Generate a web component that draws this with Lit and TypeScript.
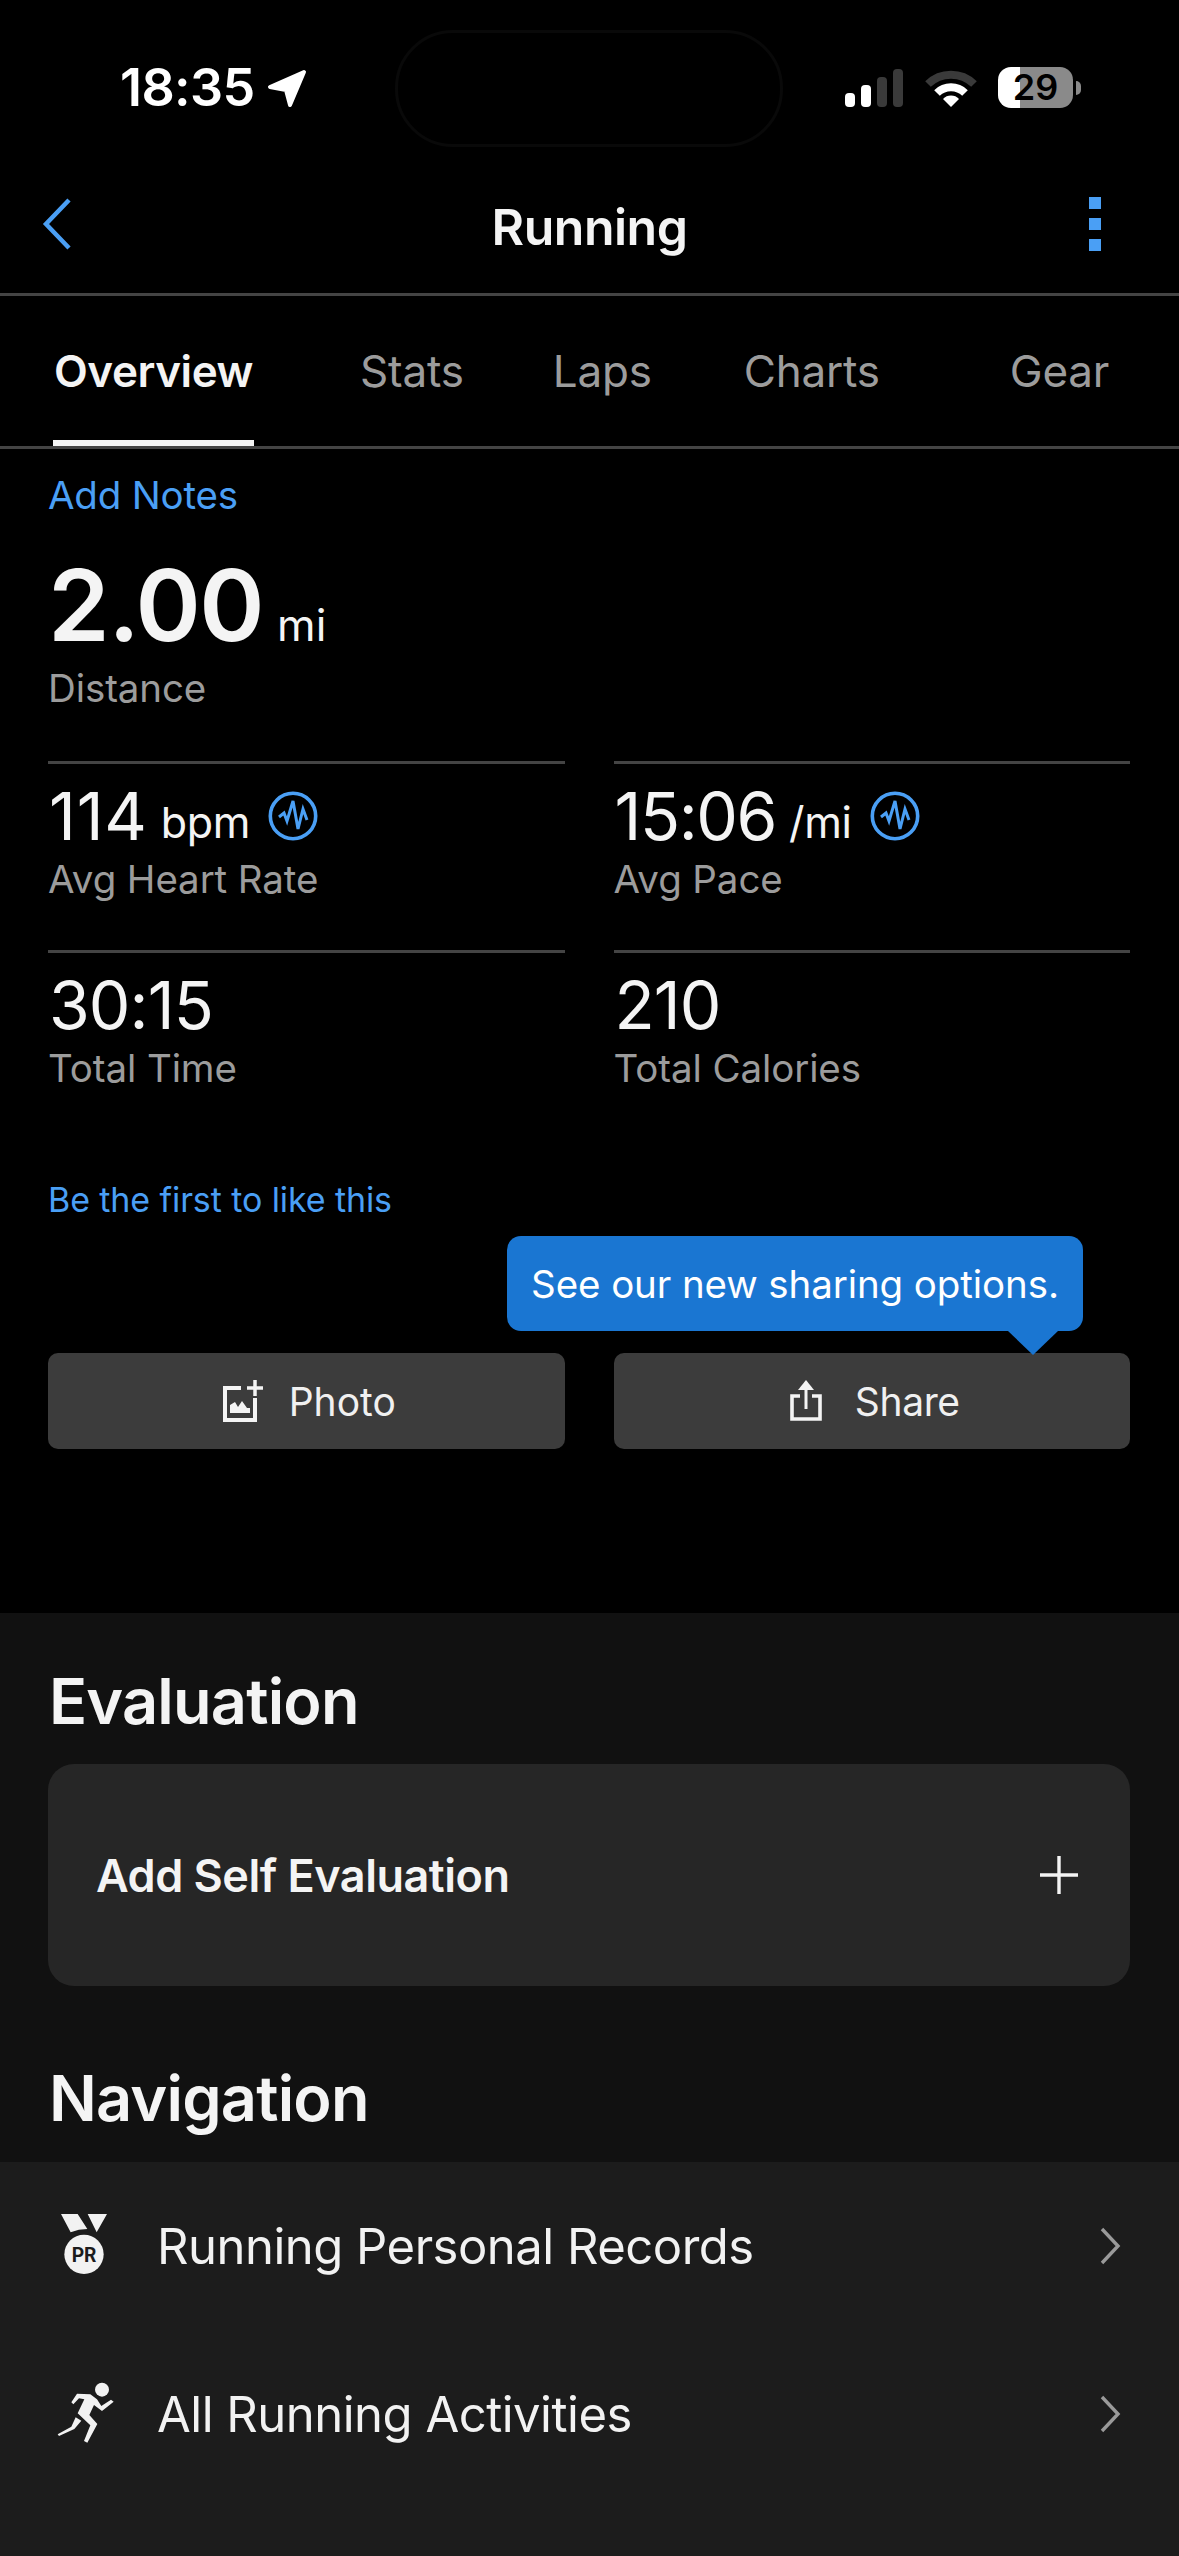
import { LitElement, html, css } from "lit";
import { customElement } from "lit/decorators.js";

const pulse = html`<svg class="pulse" viewBox="0 0 50 50" aria-hidden="true">
  <circle cx="25" cy="25" r="22.7" fill="none" stroke="#4a9ff5" stroke-width="3.6"/>
  <polyline points="11,26 16,22 19,30 25,10 30,38 35,18 39,29" fill="none" stroke="#4a9ff5" stroke-width="3"/>
</svg>`;

const chevron = html`<svg class="chev" viewBox="0 0 22 40" aria-hidden="true"><polyline points="3,3 19,20 3,37" fill="none" stroke="#9a9a9a" stroke-width="3.4"/></svg>`;

@customElement("app-root")
export class AppRoot extends LitElement {
  static styles = css`
    :host { display: block; width: 1179px; min-height: 2556px; background: #1c1c1c; color: #f4f4f4; font-family: Inter, "Liberation Sans", sans-serif; }
    * { box-sizing: border-box; }
    .top { background: #000; height: 1613px; position: relative; }

    .status { height: 150px; display: flex; align-items: flex-start; padding: 67px 0 0 120px; position: relative; }
    .time { font-size: 52px; font-weight: 600; line-height: 42px; width: 147px; letter-spacing: -0.6px; color: #fff; white-space: nowrap; }
    .loc { width: 40px; height: 39px; margin-top: 2px; }
    .island { position: absolute; left: 395px; top: 30px; width: 388px; height: 117px; border: 3px solid #090909; border-radius: 58px; }
    .sys { margin-left: auto; margin-right: 98px; display: flex; align-items: flex-start; padding-top: 2px; }
    .signal { width: 58px; height: 38px; }
    .wifi { width: 52px; height: 38px; margin-left: 22px; }
    .batt { margin-left: 21px; width: 75px; height: 41px; margin-top: -2px; border-radius: 13px; position: relative; background: linear-gradient(90deg, #fff 0 22px, #8a8a8a 22px); color: #000; font-size: 36px; font-weight: 600; line-height: 41px; text-align: center; }
    .nub { margin-left: 3px; width: 5px; height: 14px; margin-top: 12px; background: #8a8a8a; border-radius: 0 7px 7px 0; }

    .nav { height: 146px; border-bottom: 3px solid #444; display: flex; align-items: center; justify-content: space-between; padding: 5px 78px 0 42px; position: relative; }
    .back { width: 30px; height: 52px; }
    .title { position: absolute; left: 0; right: 0; top: 47px; text-align: center; font-size: 50px; line-height: 60px; font-weight: 600; letter-spacing: -0.5px; }
    .dots { display: flex; flex-direction: column; gap: 9px; }
    .dots i { display: block; width: 12px; height: 12px; background: #4a9ff5; }

    .tabs { height: 153px; border-bottom: 3px solid #444; display: flex; padding: 47px 0 0 54px; position: relative; font-size: 44px; line-height: 56px; color: #9c9c9c; letter-spacing: -0.2px; }
    .tab { white-space: nowrap; }
    .tab.on { color: #f4f4f4; font-weight: 600; position: relative; letter-spacing: -0.45px; }
    .tab.on::after { content: ""; position: absolute; left: -1px; right: -1px; top: 97px; height: 6px; background: #f4f4f4; }
    .t2 { margin-left: 107px; } .t3 { margin-left: 89px; } .t4 { margin-left: 92px; } .t5 { margin-left: 130px; }

    .body { padding: 0 49px 0 48px; }
    .link { color: #4a9ff5; }
    .notes { font-size: 38.5px; line-height: 46px; padding: 23px 0 0 0; letter-spacing: -0.2px; }
    .dist { display: flex; align-items: baseline; margin-top: 35px; height: 104px; line-height: 104px; }
    .big { font-size: 99px; font-weight: 600; letter-spacing: -1.5px; }
    .mi { font-size: 44px; margin-left: 14px; }
    .lab { font-size: 38.5px; line-height: 46px; color: #9c9c9c; letter-spacing: -0.1px; }
    .dlab { margin-top: 8px; }
    .grid { display: grid; grid-template-columns: 1fr 1fr; column-gap: 49px; margin-top: 50px; }
    .cell { border-top: 3px solid #444; height: 189px; padding-top: 13px; }
    .val { display: flex; align-items: center; height: 78px; line-height: 78px; padding-left: 1px; }
    .num { font-size: 66px; letter-spacing: -0.9px; }
    .num.wide { letter-spacing: 0.8px; }
    .num.tight { letter-spacing: -1.4px; }
    .unit { font-size: 43px; margin-left: 13px; margin-top: 12px; letter-spacing: -0.3px; }
    .pulse { width: 50px; height: 50px; margin-left: 18px; }
    .vlab { margin-top: 1px; }
    .like { font-size: 34px; line-height: 42px; letter-spacing: -0.1px; margin-top: 40px; }
    .btns { display: grid; grid-template-columns: 1fr 1fr; column-gap: 49px; margin-top: 132px; position: relative; }
    .btn { height: 96px; background: #3c3c3c; border-radius: 10px; display: flex; align-items: center; justify-content: center; padding-left: 6px; font-size: 39px; color: #f0f0f0; }
    .btn.a { gap: 24px; }
    .btn.b { gap: 33px; letter-spacing: -0.4px; }
    .ph { width: 42px; height: 42px; margin-top: -1px; }
    .sh { width: 32px; height: 41px; margin-top: -1px; }
    .tip { position: absolute; left: 459px; top: -117px; width: 576px; height: 95px; background: #1a76d2; border-radius: 14px; display: flex; align-items: center; justify-content: center; font-size: 38.5px; color: #fff; white-space: nowrap; letter-spacing: -0.1px; }
    .tip::after { content: ""; position: absolute; left: 501px; top: 95px; width: 0; height: 0; border-left: 25px solid transparent; border-right: 25px solid transparent; border-top: 24px solid #1a76d2; }

    .sec { background: #111; height: 549px; padding: 0 49px 0 48px; }
    .h { font-size: 63px; font-weight: 600; line-height: 76px; letter-spacing: -0.8px; padding-left: 1px; }
    .h1 { padding-top: 50px; }
    .card { margin-top: 25px; height: 222px; background: #262626; border-radius: 26px; display: flex; align-items: center; justify-content: space-between; padding: 0 51px 0 48px; }
    .add { font-size: 45px; font-weight: 600; letter-spacing: -0.5px; }
    .plus { width: 40px; height: 40px; }
    .h2 { margin-top: 74px; }

    .row { height: 168px; display: flex; align-items: center; position: relative; padding: 0 58px 0 157px; font-size: 49px; letter-spacing: -0.5px; color: #f2f2f2; }
    .row svg.ic { position: absolute; }
    .medal { left: 60px; top: 51px; width: 48px; height: 62px; }
    .runner { left: 57px; top: 52px; width: 58px; height: 62px; }
    .chev { width: 22px; height: 40px; margin-left: auto; }
  `;

  render() {
    return html`
      <div class="top">
        <div class="status">
          <span class="time">18:35</span>
          <svg class="loc" viewBox="0 0 40 39" aria-hidden="true"><path d="M37 3 L3 18 L19 21 L23 36 Z" fill="#fff" stroke="#fff" stroke-width="4" stroke-linejoin="round"/></svg>
          <div class="island"></div>
          <div class="sys">
            <svg class="signal" viewBox="0 0 58 38" aria-hidden="true">
              <rect x="0" y="24" width="10" height="14" rx="4" fill="#fff"/>
              <rect x="16" y="16" width="10" height="22" rx="4" fill="#fff"/>
              <rect x="32" y="8" width="10" height="30" rx="4" fill="#3a3a3a"/>
              <rect x="48" y="0" width="10" height="38" rx="4" fill="#3a3a3a"/>
            </svg>
            <svg class="wifi" viewBox="0 0 52 38" aria-hidden="true">
              <path d="M3 15 A33 33 0 0 1 49 15" fill="none" stroke="#3a3a3a" stroke-width="8"/>
              <path d="M12 24 A20 20 0 0 1 40 24" fill="none" stroke="#fff" stroke-width="8"/>
              <path d="M26 38 L18 30 A11 11 0 0 1 34 30 Z" fill="#fff"/>
            </svg>
            <div class="batt">29</div>
            <div class="nub"></div>
          </div>
        </div>
        <div class="nav">
          <svg class="back" viewBox="0 0 30 52" aria-hidden="true"><polyline points="27,2 4,26 27,50" fill="none" stroke="#4a9ff5" stroke-width="4.5"/></svg>
          <div class="title">Running</div>
          <div class="dots"><i></i><i></i><i></i></div>
        </div>
        <div class="tabs">
          <span class="tab on">Overview</span>
          <span class="tab t2">Stats</span>
          <span class="tab t3">Laps</span>
          <span class="tab t4">Charts</span>
          <span class="tab t5">Gear</span>
        </div>
        <div class="body">
          <div class="notes link">Add Notes</div>
          <div class="dist"><span class="big">2.00</span><span class="mi">mi</span></div>
          <div class="lab dlab">Distance</div>
          <div class="grid">
            <div class="cell"><div class="val"><span class="num wide">114</span><span class="unit">bpm</span>${pulse}</div><div class="lab vlab">Avg Heart Rate</div></div>
            <div class="cell"><div class="val"><span class="num tight">15:06</span><span class="unit">/mi</span>${pulse}</div><div class="lab vlab">Avg Pace</div></div>
            <div class="cell"><div class="val"><span class="num">30:15</span></div><div class="lab vlab">Total Time</div></div>
            <div class="cell"><div class="val"><span class="num">210</span></div><div class="lab vlab">Total Calories</div></div>
          </div>
          <div class="like link">Be the first to like this</div>
          <div class="btns">
            <div class="btn a">
              <svg class="ph" viewBox="0 0 42 42" aria-hidden="true">
                <path d="M18 8 H2 V40 H32 V18" fill="none" stroke="#f4f4f4" stroke-width="4"/>
                <path d="M32 0 V16 M24 8 H40" fill="none" stroke="#f4f4f4" stroke-width="3.5"/>
                <path d="M7 33 V25 L12 22 L15 27 L19 21 L24 28 L27 28 V33 Z" fill="#f4f4f4"/>
              </svg>
              <span>Photo</span>
            </div>
            <div class="btn b">
              <svg class="sh" viewBox="0 0 32 41" aria-hidden="true">
                <path d="M10 16 H2 V39 H30 V16 H22" fill="none" stroke="#f4f4f4" stroke-width="3.6"/>
                <path d="M16 29 V6" fill="none" stroke="#f4f4f4" stroke-width="3"/>
                <path d="M16 0 L24 10 H8 Z" fill="#f4f4f4"/>
              </svg>
              <span>Share</span>
            </div>
            <div class="tip">See our new sharing options.</div>
          </div>
        </div>
      </div>
      <div class="sec">
        <div class="h h1">Evaluation</div>
        <div class="card">
          <span class="add">Add Self Evaluation</span>
          <svg class="plus" viewBox="0 0 40 40" aria-hidden="true"><path d="M20 1 V39 M1 20 H39" stroke="#f4f4f4" stroke-width="3.4" fill="none"/></svg>
        </div>
        <div class="h h2">Navigation</div>
      </div>
      <div class="list">
        <div class="row">
          <svg class="ic medal" viewBox="180 190 144 186" aria-hidden="true">
            <path d="M183 193 H233 L262 238 Q236 238 212 248 Z M263 193 H321 L290 248 Z" fill="#f2f2f2"/>
            <circle cx="252" cy="314" r="59" fill="#f2f2f2"/>
            <text x="252" y="336" text-anchor="middle" font-size="58" font-weight="700" fill="#1c1c1c" font-family="Roboto, sans-serif">PR</text>
          </svg>
          Running Personal Records
          ${chevron}
        </div>
        <div class="row">
          <svg class="ic runner" viewBox="170 696 174 186" aria-hidden="true">
            <circle cx="305" cy="719" r="21" fill="#f2f2f2"/>
            <path d="M213 757 L230 731 L270 733 L290 748 L303 768 L332 749 L340 755 L305 783 L290 772 L281 765 L267 795 L291 822 L261 878 L251 873 L270 826 L232 790 L252 748 L236 745 L219 763 Z" fill="#f2f2f2"/>
            <path d="M226 802 L243 812 L222 837 L176 858 L172 853 L213 830 Z" fill="#f2f2f2"/>
          </svg>
          All Running Activities
          ${chevron}
        </div>
      </div>
    `;
  }
}
